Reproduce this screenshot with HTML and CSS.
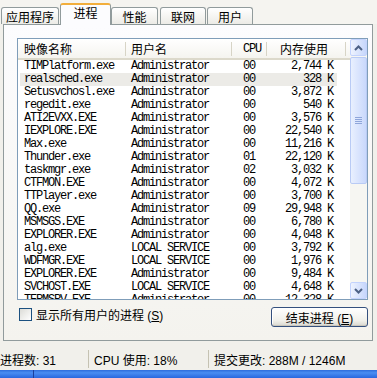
FILE: index.html
```html
<!DOCTYPE html>
<html>

<head>
  <meta charset="UTF-8">
  <meta name="viewport" content="width=device-width, initial-scale=1.0">
  <title>Windows 任务管理器</title>
  <link rel="stylesheet" href="styles.css">
</head>

<body>
  <div class="window">
    <div class="tabs">
      <div class="tab tab-apps">应用程序</div>
      <div class="tab tab-active">进程</div>
      <div class="tab tab-perf">性能</div>
      <div class="tab tab-net">联网</div>
      <div class="tab tab-users">用户</div>
    </div>

    <div class="panel">
      <div class="list">
        <div class="list-main">
          <div class="list-head">
            <div class="hcell hcell-name">映像名称</div>
            <div class="hcell hcell-user">用户名</div>
            <div class="hcell hcell-cpu">CPU</div>
            <div class="hcell hcell-mem">内存使用</div>
          </div>
          <div class="list-body">
            <div class="row"><span class="c-name">TIMPlatform.exe</span><span class="c-user">Administrator</span><span class="c-cpu">00</span><span class="c-mem">2,744 K</span></div>
            <div class="row row-selected"><span class="c-name">realsched.exe</span><span class="c-user">Administrator</span><span class="c-cpu">00</span><span class="c-mem">328 K</span></div>
            <div class="row"><span class="c-name">Setusvchosl.exe</span><span class="c-user">Administrator</span><span class="c-cpu">00</span><span class="c-mem">3,872 K</span></div>
            <div class="row"><span class="c-name">regedit.exe</span><span class="c-user">Administrator</span><span class="c-cpu">00</span><span class="c-mem">540 K</span></div>
            <div class="row"><span class="c-name">ATI2EVXX.EXE</span><span class="c-user">Administrator</span><span class="c-cpu">00</span><span class="c-mem">3,576 K</span></div>
            <div class="row"><span class="c-name">IEXPLORE.EXE</span><span class="c-user">Administrator</span><span class="c-cpu">00</span><span class="c-mem">22,540 K</span></div>
            <div class="row"><span class="c-name">Max.exe</span><span class="c-user">Administrator</span><span class="c-cpu">00</span><span class="c-mem">11,216 K</span></div>
            <div class="row"><span class="c-name">Thunder.exe</span><span class="c-user">Administrator</span><span class="c-cpu">01</span><span class="c-mem">22,120 K</span></div>
            <div class="row"><span class="c-name">taskmgr.exe</span><span class="c-user">Administrator</span><span class="c-cpu">02</span><span class="c-mem">3,032 K</span></div>
            <div class="row"><span class="c-name">CTFMON.EXE</span><span class="c-user">Administrator</span><span class="c-cpu">00</span><span class="c-mem">4,072 K</span></div>
            <div class="row"><span class="c-name">TTPlayer.exe</span><span class="c-user">Administrator</span><span class="c-cpu">00</span><span class="c-mem">3,700 K</span></div>
            <div class="row"><span class="c-name">QQ.exe</span><span class="c-user">Administrator</span><span class="c-cpu">09</span><span class="c-mem">29,948 K</span></div>
            <div class="row"><span class="c-name">MSMSGS.EXE</span><span class="c-user">Administrator</span><span class="c-cpu">00</span><span class="c-mem">6,780 K</span></div>
            <div class="row"><span class="c-name">EXPLORER.EXE</span><span class="c-user">Administrator</span><span class="c-cpu">00</span><span class="c-mem">4,048 K</span></div>
            <div class="row"><span class="c-name">alg.exe</span><span class="c-user">LOCAL SERVICE</span><span class="c-cpu">00</span><span class="c-mem">3,792 K</span></div>
            <div class="row"><span class="c-name">WDFMGR.EXE</span><span class="c-user">LOCAL SERVICE</span><span class="c-cpu">00</span><span class="c-mem">1,976 K</span></div>
            <div class="row"><span class="c-name">EXPLORER.EXE</span><span class="c-user">Administrator</span><span class="c-cpu">00</span><span class="c-mem">9,484 K</span></div>
            <div class="row"><span class="c-name">SVCHOST.EXE</span><span class="c-user">LOCAL SERVICE</span><span class="c-cpu">00</span><span class="c-mem">4,648 K</span></div>
            <div class="row"><span class="c-name">TERMSRV.EXE</span><span class="c-user">Administrator</span><span class="c-cpu">00</span><span class="c-mem">12,328 K</span></div>
          </div>
        </div>

        <div class="scrollbar">
          <div class="sb-btn">
            <svg width="9" height="6" viewBox="0 0 9 6"><path d="M1 5 L4.5 1.5 L8 5" fill="none" stroke="#4D6185" stroke-width="2" /></svg>
          </div>
          <div class="sb-track">
            <div class="sb-thumb">
              <span class="grip"></span>
              <span class="grip"></span>
              <span class="grip"></span>
              <span class="grip"></span>
            </div>
          </div>
          <div class="sb-btn">
            <svg width="9" height="6" viewBox="0 0 9 6"><path d="M1 1 L4.5 4.5 L8 1" fill="none" stroke="#4D6185" stroke-width="2" /></svg>
          </div>
        </div>
      </div>

      <div class="actions">
        <div class="check"><span class="check-box"></span><span class="check-label">显示所有用户的进程 (<u>S</u>)</span></div>
        <div class="button"><span>结束进程 (<u>E</u>)</span></div>
      </div>
    </div>

    <div class="status">
      <div class="status-cell status-procs">进程数: 31</div>
      <div class="status-cell status-cpu">CPU 使用: 18%</div>
      <div class="status-cell status-mem">提交更改: 288M / 1246M</div>
    </div>

    <div class="taskbar">
      <div class="taskbar-start"></div>
      <div class="taskbar-rest"></div>
    </div>
  </div>
</body>

</html>
```

FILE: styles.css
```css
body {
  margin: 0;
  background: #F1F0EB;
  font-family: "Noto Sans CJK SC", sans-serif;
  font-size: 12px;
  color: #000;
}

.window {
  width: 377px;
  height: 378px;
  display: flex;
  flex-direction: column;
  overflow: hidden;
}

/* tabs */
.tabs {
  display: flex;
  align-items: flex-end;
  height: 24px;
  padding-left: 1px;
  position: relative;
  z-index: 1;
  background: #F5F4F0;
}

.tab {
  height: 17px;
  box-sizing: border-box;
  border: 1px solid #919B9C;
  border-bottom: none;
  border-radius: 3px 3px 0 0;
  background: linear-gradient(#FFFFFF, #ECEBE6);
  display: flex;
  align-items: center;
  justify-content: center;
  padding-top: 1px;
  line-height: 1;
}

.tab-apps {
  width: 58px;
  margin-right: 1px;
}

.tab-active {
  width: 51px;
  height: 22px;
  margin-bottom: -1px;
  padding-top: 0;
  padding-bottom: 4px;
  background: #FCFCFE;
  border-top: 2px solid #F2AE3C;
}

.tab-perf {
  width: 47px;
  margin-right: 2px;
}

.tab-net {
  width: 46px;
  margin-right: 1px;
}

.tab-users {
  width: 46px;
}

/* panel */
.panel {
  width: 370px;
  height: 317px;
  margin-left: 3px;
  box-sizing: border-box;
  border: 1px solid #919B9C;
  background: linear-gradient(#FCFCFE, #F4F3EE);
  padding: 13px 4px 0 13px;
}

.list {
  height: 262px;
  box-sizing: border-box;
  border: 1px solid #7F9DB9;
  background: #fff;
  display: flex;
}

.list-main {
  flex: 1;
  min-width: 0;
  display: flex;
  flex-direction: column;
}

.list-head {
  display: grid;
  grid-template-columns: 108px 106px 35px 79px;
  height: 21px;
  box-sizing: border-box;
  background: linear-gradient(#FFFFFF, #F5F4EF);
  border-bottom: 2px solid #DCD9CB;
}

.hcell {
  display: flex;
  align-items: center;
  white-space: nowrap;
  background: linear-gradient(#D7D4C6, #D7D4C6) right 3px / 1px 14px no-repeat;
}

.hcell-name {
  padding-left: 6px;
}

.hcell-user {
  padding-left: 5px;
}

.hcell-cpu {
  padding-left: 11px;
  font-family: "Liberation Mono", monospace;
  font-size: 12px;
  letter-spacing: -1.2px;
}

.hcell-mem {
  justify-content: flex-end;
  padding-right: 18px;
}

.list-body {
  flex: 1;
  overflow: hidden;
  padding-left: 2px;
}

.row {
  display: grid;
  grid-template-columns: 106px 106px 35px 70px;
  width: 317px;
  height: 13px;
  line-height: 13px;
  font-family: "Liberation Mono", monospace;
  font-size: 12px;
  letter-spacing: -1.2px;
  white-space: nowrap;
}

.row span {
  overflow: hidden;
}

.row-selected {
  background: #ECEBE7;
}

.c-name {
  padding-left: 4px;
}

.c-user {
  padding-left: 5px;
}

.c-cpu {
  padding-left: 11px;
}

.c-mem {
  text-align: right;
  padding-right: 4px;
}

/* scrollbar */
.scrollbar {
  width: 17px;
  display: flex;
  flex-direction: column;
  background: #F6F6F2;
}

.sb-btn {
  height: 17px;
  box-sizing: border-box;
  border: 1px solid #C3D3FD;
  border-radius: 2px;
  background: linear-gradient(to right, #EEF3FE, #C6D6FC);
  display: flex;
  align-items: center;
  justify-content: center;
}

.sb-track {
  flex: 1;
}

.sb-thumb {
  height: 127px;
  margin-top: 1px;
  box-sizing: border-box;
  border: 1px solid #B9CBF5;
  border-radius: 2px;
  background: linear-gradient(to right, #E9F0FE, #C9D8FC);
  display: flex;
  flex-direction: column;
  align-items: center;
  justify-content: center;
  gap: 1px;
}

.grip {
  width: 7px;
  height: 1px;
  background: #8FA6DA;
}

/* bottom row */
.actions {
  display: flex;
  justify-content: space-between;
  align-items: flex-start;
  margin-top: 7px;
  font-family: "Liberation Sans", "Noto Sans CJK SC", sans-serif;
}

.check {
  display: flex;
  align-items: center;
  gap: 4px;
  padding-left: 2px;
  margin-top: 1px;
  height: 13px;
}

.check-label {
  white-space: pre;
}

.check-box {
  width: 13px;
  height: 13px;
  box-sizing: border-box;
  border: 1px solid #1C5180;
  background: linear-gradient(135deg, #DCDCD7, #FFFFFF);
}

.button {
  width: 97px;
  height: 20px;
  box-sizing: border-box;
  border: 1px solid #34507E;
  border-radius: 3px;
  background: linear-gradient(#FFFFFF, #F0F0EA 70%, #D8D7D0);
  box-shadow: inset 0 -1px 0 #C9C7BC, inset 1px 1px 0 #FFFFFF;
  display: flex;
  align-items: center;
  justify-content: center;
  white-space: pre;
}

/* status bar */
.status {
  height: 29px;
  box-sizing: border-box;
  padding-top: 9px;
  display: flex;
  align-items: flex-start;
  font-family: "Liberation Sans", "Noto Sans CJK SC", sans-serif;
}

.status-cell {
  height: 18px;
  display: flex;
  align-items: center;
  white-space: pre;
}

.status-procs {
  width: 88px;
}

.status-cpu {
  width: 114px;
  padding-left: 5px;
  border-left: 1px solid #C5C2B2;
}

.status-mem {
  padding-left: 5px;
  border-left: 1px solid #C5C2B2;
}

/* taskbar */
.taskbar {
  flex: 1;
  display: flex;
  background: linear-gradient(#2F6CDB, #4A8DF2 35%, #2A67DE);
}

.taskbar-start {
  width: 33px;
  border-right: 1px solid #1B3F9C;
}
```
